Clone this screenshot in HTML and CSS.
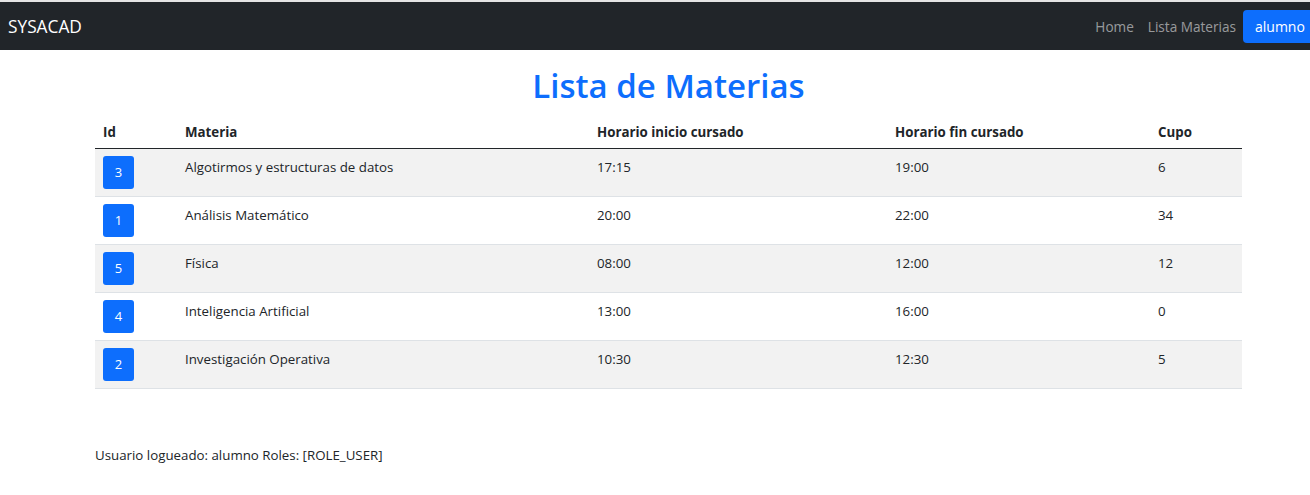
FILE: index.html
```html
<!DOCTYPE html>
<html lang="es">
<head>
<meta charset="utf-8">
<title>SYSACAD</title>
<link rel="stylesheet" href="styles.css">
</head>
<body>
<nav class="navbar">
  <a class="brand" href="#">SYSACAD</a>
  <div class="nav-right">
    <a class="nav-link" href="#">Home</a>
    <a class="nav-link" href="#">Lista Materias</a>
    <button class="btn-user">alumno</button>
  </div>
</nav>
<main class="container">
  <h1 class="title">Lista de Materias</h1>
  <table class="table">
    <thead>
      <tr>
        <th class="c-id">Id</th>
        <th class="c-mat">Materia</th>
        <th class="c-ini">Horario inicio cursado</th>
        <th class="c-fin">Horario fin cursado</th>
        <th class="c-cupo">Cupo</th>
      </tr>
    </thead>
    <tbody>
      <tr><td><button class="btn-id">3</button></td><td>Algotirmos y estructuras de datos</td><td>17:15</td><td>19:00</td><td>6</td></tr>
      <tr><td><button class="btn-id">1</button></td><td>Análisis Matemático</td><td>20:00</td><td>22:00</td><td>34</td></tr>
      <tr><td><button class="btn-id">5</button></td><td>Física</td><td>08:00</td><td>12:00</td><td>12</td></tr>
      <tr><td><button class="btn-id">4</button></td><td>Inteligencia Artificial</td><td>13:00</td><td>16:00</td><td>0</td></tr>
      <tr><td><button class="btn-id">2</button></td><td>Investigación Operativa</td><td>10:30</td><td>12:30</td><td>5</td></tr>
    </tbody>
  </table>
  <p class="user-info">Usuario logueado: alumno Roles: [ROLE_USER]</p>
</main>
</body>
</html>
```
FILE: styles.css
```css
* { box-sizing: border-box; }
html, body {
  margin: 0;
  padding: 0;
  overflow: hidden;
}
body {
  font-family: "Open Sans", "Noto Sans", sans-serif;
  font-size: 13.3px;
  color: #212529;
  background: #fff;
  border-top: 2px solid #e4e4e4;
}
.navbar {
  display: flex;
  align-items: center;
  justify-content: space-between;
  height: 48px;
  background: #212529;
  padding-left: 8px;
  overflow: hidden;
}
.brand {
  color: #fff;
  text-decoration: none;
  font-size: 17.3px;
}
.nav-right {
  display: flex;
  align-items: center;
  margin-right: -6px;
}
.nav-link {
  color: rgba(255,255,255,0.55);
  text-decoration: none;
  font-size: 13.6px;
  padding: 0 7px;
}
.btn-user {
  background: #0d6efd;
  color: #fff;
  border: none;
  border-radius: 4px;
  font-family: inherit;
  font-size: 14px;
  height: 33px;
  padding: 0 12px;
  width: 73px;
}
.container {
  padding: 0 68px 0 95px;
}
.title {
  margin: 16px 0 9px;
  text-align: center;
  color: #0d6efd;
  font-weight: 600;
  font-size: 33px;
  line-height: 1.2;
}
.table {
  width: 100%;
  border-collapse: collapse;
}
.table th {
  text-align: left;
  font-weight: 700;
  padding: 8px 8px 7px;
  border-bottom: 1px solid #212529;
}
.table td {
  padding: 7px 8px;
  vertical-align: top;
  border-bottom: 1px solid #dee2e6;
  height: 48px;
}
.table tbody tr:nth-child(odd) td { background: #f2f2f2; }
.c-id { width: 82px; }
.c-mat { width: 412px; }
.c-ini { width: 298px; }
.c-fin { width: 263px; }
.btn-id {
  background: #0d6efd;
  color: #fff;
  border: none;
  border-radius: 3px;
  width: 31px;
  height: 33px;
  font-family: inherit;
  font-size: 13px;
  padding: 0;
}
.table td:not(:first-child) { padding-top: 9px; }
.user-info {
  margin: 57px 0 0;
}
```
